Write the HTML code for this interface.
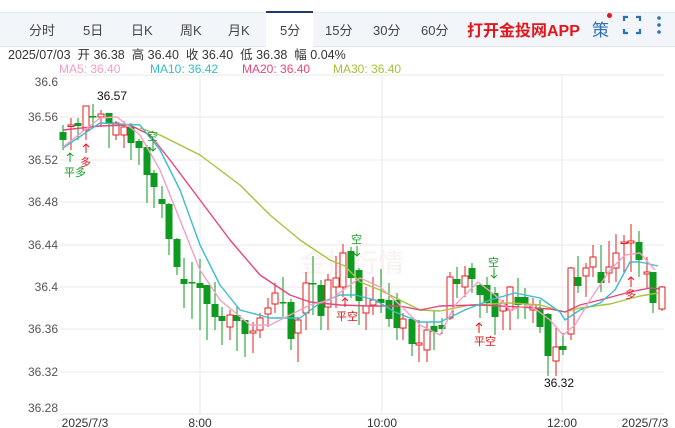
<!DOCTYPE html>
<html><head><meta charset="utf-8"><style>
body{margin:0;width:675px;height:428px;background:#fff;overflow:hidden;font-family:"Liberation Sans","Noto Sans CJK SC",sans-serif;position:relative}
.bar{position:absolute;left:0;top:12px;width:675px;height:33px;background:#f2f6fb;border-top:1px solid #e3e8ef;border-bottom:1px solid #e3e8ef}
.t{position:absolute;top:20px;font-size:13px;color:#444}
.act{position:absolute;left:266px;top:11px;width:47px;height:35px;background:#fff;border-top:2px solid #1d3a6b}
.info{position:absolute;left:8px;top:44px;font-size:12.5px;color:#333}
.ma{position:absolute;top:62px;font-size:12px}
</style></head><body>
<div class="bar"></div>
<div class="act"></div>
<span class="t" style="left:29px">分时</span>
<span class="t" style="left:83px">5日</span>
<span class="t" style="left:131px">日K</span>
<span class="t" style="left:180px">周K</span>
<span class="t" style="left:228px">月K</span>
<span class="t" style="left:280px">5分</span>
<span class="t" style="left:325px">15分</span>
<span class="t" style="left:373px">30分</span>
<span class="t" style="left:421px">60分</span>
<span style="position:absolute;left:467px;top:17px;font-size:16px;font-weight:bold;color:#e4161b">打开金投网APP</span>
<span style="position:absolute;left:592px;top:16px;font-size:17px;color:#2f6fb5">策</span>
<span style="position:absolute;left:607px;top:13px;width:5px;height:5px;border-radius:50%;background:#e4161b"></span>
<svg style="position:absolute;left:622px;top:15px" width="20" height="20"><path d="M2 6V2h4M14 2h4v4M18 14v4h-4M6 18H2v-4" stroke="#2f6fb5" stroke-width="2.2" fill="none"/></svg>
<svg style="position:absolute;left:655px;top:14px" width="8" height="22"><circle cx="4" cy="4" r="1.8" fill="#2f6fb5"/><circle cx="4" cy="11" r="1.8" fill="#2f6fb5"/><circle cx="4" cy="18" r="1.8" fill="#2f6fb5"/></svg>
<div class="info">2025/07/03 &nbsp;开 36.38 &nbsp;高 36.40 &nbsp;收 36.40 &nbsp;低 36.38 &nbsp;幅 0.04%</div>
<span class="ma" style="left:59px;color:#f19ec2">MA5: 36.40</span>
<span class="ma" style="left:150px;color:#35bccb">MA10: 36.42</span>
<span class="ma" style="left:242px;color:#e9457a">MA20: 36.40</span>
<span class="ma" style="left:333px;color:#a4c23a">MA30: 36.40</span>
<svg id="c" style="position:absolute;left:0;top:0" width="675" height="428" font-family="Liberation Sans, Noto Sans CJK SC, sans-serif">
<g stroke="#e8e8e8" stroke-width="1">
<line x1="60" y1="75" x2="664" y2="75"/><line x1="60" y1="117" x2="664" y2="117"/><line x1="60" y1="160" x2="664" y2="160"/><line x1="60" y1="202" x2="664" y2="202"/><line x1="60" y1="245" x2="664" y2="245"/><line x1="60" y1="287" x2="664" y2="287"/><line x1="60" y1="329" x2="664" y2="329"/><line x1="60" y1="372" x2="664" y2="372"/><line x1="60" y1="414" x2="664" y2="414"/>
<line x1="200" y1="75" x2="200" y2="414"/><line x1="382" y1="75" x2="382" y2="414"/><line x1="562" y1="75" x2="562" y2="414"/>
</g>
<g font-size="12" fill="#555" text-anchor="end">
<text x="58" y="86">36.6</text><text x="58" y="121">36.56</text><text x="58" y="164">36.52</text><text x="58" y="206">36.48</text><text x="58" y="249">36.44</text><text x="58" y="291">36.4</text><text x="58" y="333">36.36</text><text x="58" y="376">36.32</text><text x="58" y="412">36.28</text>
</g>
<g font-size="12" fill="#333" text-anchor="middle">
<text x="85" y="427">2025/7/3</text><text x="200" y="427">8:00</text><text x="382" y="427">10:00</text><text x="562" y="427">12:00</text><text x="645" y="427">2025/7/3</text>
</g>
<text x="300" y="272" font-size="26" fill="#f8ebea" opacity="0.7">金投行情</text>
<g id="k"></g>
<g fill="none" stroke-width="1.4" stroke-linejoin="round">
<polyline stroke="#a8c23e" points="140,128 160,135 200,155 240,185 270,215 300,240 330,260 345,266 360,282 380,290 400,300 420,310 440,311 470,305 510,303 540,305 565,312 580,308 610,304 640,296 658,293"/>
<polyline stroke="#e6457a" points="63,130 100,126 130,125 150,135 170,160 200,200 230,240 260,275 290,295 310,302 340,305 370,306 400,306 420,310 440,306 480,305 520,307 550,309 565,312 580,305 600,300 630,292 650,288 660,289"/>
<polyline stroke="#3cbccc" points="63,148 100,123 140,125 160,150 180,190 200,245 220,285 240,310 270,318 300,318 320,303 340,295 355,295 375,300 395,312 420,322 440,322 465,310 490,300 515,293 540,298 560,312 565,320 580,310 600,303 615,290 630,262 640,262 658,266"/>
<polyline stroke="#f4a0c4" points="63,147 100,118 117,117 140,135 160,170 180,220 200,270 220,300 250,325 270,325 290,315 310,305 330,300 350,285 360,278 380,287 400,305 420,325 440,335 455,305 478,282 495,295 510,310 530,305 550,320 563,335 575,325 590,300 610,270 625,255 640,253 655,270"/>
</g>
<g font-size="11">
<text x="64" y="176" fill="#1a9a2a">平多</text><path d="M70 162v-9m-3 3l3-3 3 3" stroke="#1a9a2a" fill="none"/>
<text x="80" y="166" fill="#e4161b">多</text><path d="M86 153v-9m-3 3l3-3 3 3" stroke="#e4161b" fill="none"/>
<text x="147" y="140" fill="#1a9a2a">空</text><path d="M153 142v9m-3-3l3 3 3-3" stroke="#1a9a2a" fill="none"/>
<text x="351" y="243" fill="#1a9a2a">空</text><path d="M357 246v10m-3-3l3 3 3-3" stroke="#1a9a2a" fill="none"/>
<text x="336" y="320" fill="#e4161b">平空</text><path d="M345 307v-9m-3 3l3-3 3 3" stroke="#e4161b" fill="none"/>
<text x="488" y="266" fill="#1a9a2a">空</text><path d="M494 268v10m-3-3l3 3 3-3" stroke="#1a9a2a" fill="none"/>
<text x="474" y="345" fill="#e4161b">平空</text><path d="M479 333v-10m-3 3l3-3 3 3" stroke="#e4161b" fill="none"/>
<text x="625" y="298" fill="#e4161b">多</text><path d="M631 287v-10m-3 3l3-3 3 3" stroke="#e4161b" fill="none"/>
</g>
<text x="97" y="100" font-size="12" fill="#111">36.57</text>
<text x="544" y="387" font-size="12" fill="#111">36.32</text>
</svg>
<script>
var d=[[63,'g',132,140,125,150],[71,'r',125,126,118,150],[78,'g',123,126,118,140],[86,'r',106,130,106,140],[93,'g',116,116,104,127],[101,'r',114,117,110,127],[109,'g',113,123,113,148],[116,'r',123,135,121,140],[124,'r',127,135,121,148],[131,'g',127,143,123,160],[139,'g',141,148,139,165],[147,'g',147,175,145,203],[154,'g',173,187,170,208],[162,'g',199,204,186,218],[169,'g',204,239,203,255],[177,'g',239,267,238,275],[184,'g',279,284,258,308],[192,'g',282,282,262,319],[200,'g',283,288,259,330],[207,'g',285,304,285,340],[215,'g',304,317,282,330],[222,'g',316,321,307,345],[230,'r',315,327,310,340],[237,'g',315,321,307,351],[245,'g',320,334,320,357],[253,'r',331,333,322,353],[260,'r',318,330,313,338],[268,'r',308,314,298,327],[275,'r',293,304,283,313],[283,'g',302,302,277,317],[291,'g',302,339,299,350],[298,'r',320,333,317,362],[306,'r',283,313,272,330],[313,'g',283,283,256,315],[321,'g',285,316,280,330],[328,'r',280,307,274,330],[336,'r',278,287,256,308],[343,'r',253,287,244,297],[351,'g',251,278,247,298],[359,'g',270,301,268,325],[366,'r',306,313,287,330],[373,'r',300,305,277,315],[381,'g',299,303,269,313],[389,'g',300,319,283,327],[397,'g',300,328,293,340],[403,'r',319,328,313,340],[412,'g',319,344,319,356],[419,'r',343,345,320,362],[427,'r',330,350,322,362],[434,'g',326,332,310,350],[442,'g',325,329,318,334],[450,'r',277,318,272,320],[457,'g',279,284,267,298],[465,'r',276,287,266,297],[472,'g',268,279,263,293],[480,'g',285,295,283,318],[487,'g',285,303,277,313],[495,'g',293,317,287,335],[503,'r',303,311,300,330],[510,'r',287,310,286,330],[518,'g',297,305,278,319],[525,'g',297,304,288,319],[533,'r',305,310,298,323],[540,'g',308,327,300,333],[548,'g',314,356,313,376],[556,'r',347,361,328,376],[563,'g',346,350,333,355],[571,'r',268,334,267,340],[578,'g',277,286,256,293],[586,'r',268,276,263,297],[593,'r',257,267,245,277],[601,'g',272,283,245,292],[609,'r',267,273,241,283],[616,'r',253,268,234,282],[624,'r',242,243,235,273],[631,'r',241,243,224,272],[639,'g',242,260,231,277],[647,'r',272,274,257,288],[653,'g',272,303,272,313],[662,'r',287,309,286,311]];
var s='';d.forEach(function(c){var col=c[1]=='g'?'#0e9a1e':'#e02020';var h=Math.max(c[3]-c[2],1.5);
s+='<line x1="'+c[0]+'" x2="'+c[0]+'" y1="'+c[4]+'" y2="'+c[5]+'" stroke="'+col+'"/>';
if(c[1]=='g')s+='<rect x="'+(c[0]-3.5)+'" y="'+c[2]+'" width="7" height="'+h+'" fill="'+col+'"/>';
else s+='<rect x="'+(c[0]-3)+'" y="'+c[2]+'" width="6" height="'+h+'" fill="#fff" stroke="'+col+'"/>';});
document.getElementById('k').innerHTML=s;
</script>
</body></html>
